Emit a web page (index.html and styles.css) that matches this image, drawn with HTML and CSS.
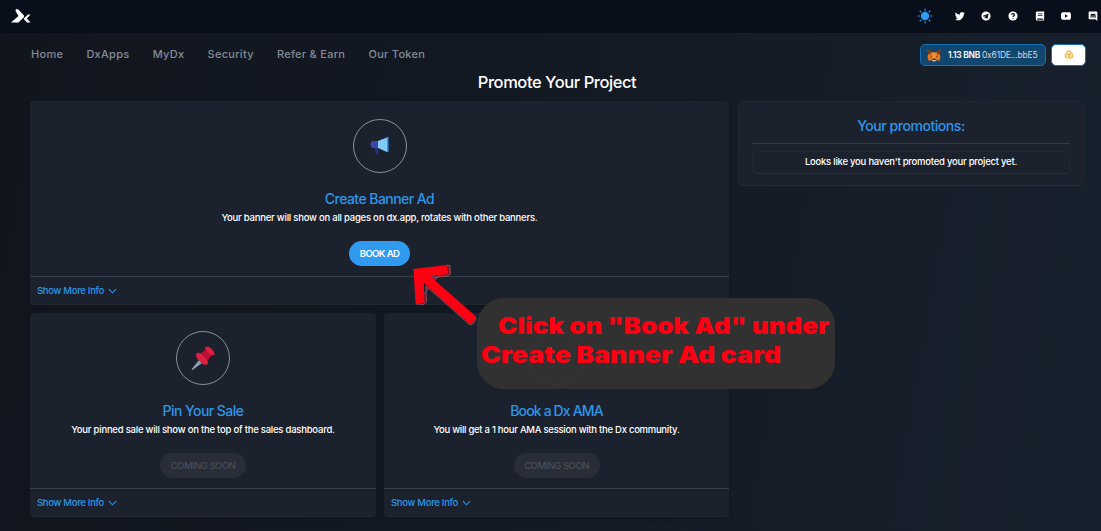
FILE: index.html
```html
<!DOCTYPE html>
<html lang="en">
<head>
<meta charset="utf-8">
<title>Promote Your Project</title>
<link rel="stylesheet" href="styles.css">
</head>
<body>
<header class="topbar">
  <svg class="logo" viewBox="0 0 20 14" fill="#fff"><path d="M5 0L7.300 .6L13 6.500L13 8L7.500 13.500H0L7.500 7L4.500 2Z"/><path d="M19.500 5.500H17L12.500 9.700L16 13.500H19.500L15.900 9.600Z"/></svg>
  <div class="social">
    <svg class="sun" viewBox="0 0 16 16"><circle cx="8" cy="8" r="3.600"/><path d="M8 1V2.400M8 13.600V15M1 8H2.400M13.600 8H15M3 3L4 4M12 12L13 13M3 13L4 12M12 4L13 3"/></svg>
    <svg viewBox="0 0 24 24"><path d="M23.600 5c-.9.400-1.800.600-2.800.800 1-.600 1.800-1.500 2.100-2.700-.9.600-2 1-3.100 1.200A4.900 4.900 0 0 0 11.500 8.800 13.900 13.900 0 0 1 1.400 3.700a4.900 4.900 0 0 0 1.500 6.600c-.8 0-1.500-.2-2.200-.6 0 2.400 1.700 4.400 3.900 4.900-.7.200-1.500.2-2.200.1.600 1.900 2.400 3.300 4.600 3.400A9.900 9.900 0 0 1-.2 20.100 13.900 13.900 0 0 0 21.200 7.700c.9-.7 1.700-1.600 2.400-2.700z"/></svg>
    <svg viewBox="0 0 24 24"><path fill-rule="evenodd" d="M12 1a11 11 0 1 0 0 22 11 11 0 0 0 0-22zM18 7l-2.200 11c-.2.800-.7.900-1.300.6l-3.300-2.500-1.700 1.700c-.5.400-.8.200-.8-.5l.3-3 6-5.500-7.500 4.700-3-1c-.8-.3-.8-.8.200-1.200L17 6.300c.7-.2 1.200 0 1 .7z"/></svg>
    <svg viewBox="0 0 24 24"><circle cx="12" cy="12" r="11"/><path d="M8.500 9C9 4.800 16 5.300 15.500 9.500C15.300 11.500 12 11.500 12 14.300M12 17V18.800" fill="none" stroke="#09101b" stroke-width="3"/></svg>
    <svg viewBox="0 0 24 24"><path fill-rule="evenodd" d="M6 1H22V17.500L21 18V21H22V23H6C3.500 23 2 21.500 2 19V5C2 2.500 3.500 1 6 1zM7 6V8H18V6zM7 10V12H18V10zM6 18C4.500 18 4.500 21 6 21H19V18z"/></svg>
    <svg viewBox="0 0 24 24"><path fill-rule="evenodd" d="M4 3H20C23 3 24 5 24 12S23 21 20 21H4C1 21 0 19 0 12S1 3 4 3zM9.500 8V16L16.500 12z"/></svg>
    <svg viewBox="0 0 24 24"><path fill-rule="evenodd" d="M4 1H20Q22.500 1 22.500 3.500V24L18 20H4Q1.500 20 1.500 17.500V3.500Q1.500 1 4 1zM6 15Q8 17 9 16L8.500 15H15.500L15 16Q17 17 18.500 15Q18.500 9 17 7L14 6L13.500 7H10.500L10 6L7 7Q5.500 10 6 15zM8 11H10.500V13.500H8zM13.500 11H16V13.500H13.500z"/></svg>
  </div>
</header>
<nav class="nav">
  <div class="links"><a>Home</a><a>DxApps</a><a>MyDx</a><a>Security</a><a>Refer &amp; Earn</a><a>Our Token</a></div>
  <div class="wallet">
    <div class="account">
      <svg class="fox" viewBox="0 0 28 26"><path fill="#e8741f" d="M1 1L11 7H17L27 1L25.500 11L27 16L24.500 24L18 22L16 24H12L10 22L3.500 24L1 16L2.500 11Z"/><path fill="#763d16" d="M1 1L9 4.500L8 9L2.500 11ZM27 1L19 4.500L20 9L25.500 11Z"/><path fill="#f6912d" d="M11 7H17L18 16L14 21L10 16Z"/><path fill="#34343c" d="M7 13L11 15L7.500 15.500ZM21 13L17 15L20.500 15.500ZM11.500 19H16.500L17 22H11Z"/><path fill="#d9c1b3" d="M10 22H18L16 25H12Z"/></svg>
      <span class="balance">1.13 BNB</span><span class="address">0x61DE...bbE5</span>
    </div>
    <div class="chain"><svg viewBox="0 0 20 20"><path fill="#f9dfa8" d="M10 1L18 5.500V14.500L10 19L2 14.500V5.500Z"/><path fill="none" stroke="#eba51f" stroke-width="1.800" d="M5 6.500L10 9.500L15 6.500M10 9.500V16M2.500 8V14L7 17M17.500 8V14L13 17M5 4L10 1.500L15 4"/></svg></div>
  </div>
</nav>
<main class="page">
  <h1 class="title">Promote Your Project</h1>
  <div class="columns">
    <div class="cards">
      <section class="card wide">
        <div class="body">
          <div class="ring"><svg class="horn" viewBox="0 0 20 20"><path fill="#2a2f88" d="M4.500 10H9L8 13.500L8.500 17.500Q7.500 19 5.500 17.500ZM17 7Q20.500 8.500 17 11Z"/><path fill="#3949ab" d="M3 5H9V12H3Q1 12 1 10.500L.5 8.500L1 6.500Q1 5 3 5Z"/><path fill="#82caf9" d="M8 5L17 1.500V16L8 12Z"/><path fill="#2196f3" d="M17 1Q18.500 0 18.500 2V15Q18.500 17 17 16Z"/></svg></div>
          <h2 class="name">Create Banner Ad</h2>
          <p class="text">Your banner will show on all pages on dx.app, rotates with other banners.</p>
          <button class="btn">BOOK AD</button>
        </div>
        <div class="more"><span>Show More Info</span><svg viewBox="0 0 10 6"><path d="M1 1L5 5L9 1"/></svg></div>
      </section>
      <section class="card">
        <div class="body">
          <div class="ring"><svg class="pin" viewBox="0 0 24 24"><path fill="#8fa1ad" d="M8 14L11 17L1.500 24L.5 23.500Z"/><path fill="#b90f31" d="M9 8L15 3L21 9L16 15Z"/><path fill="#df1f42" d="M14.500 1Q17-.5 19.500 2L22 4.500Q24.500 7.500 23 9Q20.500 10 17.500 7L16 5Q13 2 14.500 1ZM6 7Q9 6 12.500 10L14.500 12Q18 15.500 16.500 18Q13.500 20.500 9.500 16L7 13.500Q3.500 9.500 6 7Z"/></svg></div>
          <h2 class="name">Pin Your Sale</h2>
          <p class="text">Your pinned sale will show on the top of the sales dashboard.</p>
          <button class="btn soon" disabled>COMING SOON</button>
        </div>
        <div class="more"><span>Show More Info</span><svg viewBox="0 0 10 6"><path d="M1 1L5 5L9 1"/></svg></div>
      </section>
      <section class="card">
        <div class="body">
          <div class="ring"></div>
          <h2 class="name ama">Book a Dx AMA</h2>
          <p class="text ama-text">You will get a 1 hour AMA session with the Dx community.</p>
          <button class="btn soon" disabled>COMING SOON</button>
        </div>
        <div class="more"><span>Show More Info</span><svg viewBox="0 0 10 6"><path d="M1 1L5 5L9 1"/></svg></div>
      </section>
    </div>
    <aside class="promos">
      <h2 class="name">Your promotions:</h2>
      <p class="empty">Looks like you haven't promoted your project yet.</p>
    </aside>
  </div>
</main>
<div class="callout"><span class="line first">Click on "Book Ad" under</span><span class="line second">Create Banner Ad card</span></div>
<svg class="arrow" viewBox="0 0 70 66"><path fill="#8c1422" stroke="#a86a7c" stroke-width=".6" d="M37 1L40 1.500L40.500 10L38 12L20 14L66 55L63.500 59.500L60 61L16 22L16.500 38L14 40.500L6 40Z"/><path fill="#ff0012" d="M3.500 5L37 1V10L20.500 12.500L66.500 53L60 60L14 19V39H5.500Z"/></svg>
</body>
</html>
```
FILE: styles.css
```css
* { box-sizing: border-box; }
body {
  margin: 0; height: 531px; overflow: hidden; position: relative;
  font-family: Inter, "Liberation Sans", sans-serif; font-size: 9.5px; color: #fff;
  background: linear-gradient(100deg, #11151e 0%, #131a24 50%, #17212d 100%);
}
h1, h2, p { margin: 0; font-weight: 500; white-space: nowrap; }
.topbar { height: 33px; background: #080f1b; display: flex; justify-content: space-between; align-items: center; padding: 0 3px 1px 11px; }
.logo { width: 20px; height: 14px; }
.social { display: flex; align-items: center; gap: 16.7px; }
.social svg { width: 10px; height: 10px; fill: #fff; flex: none; }
.social .sun { width: 16px; height: 16px; fill: #2e9bf0; stroke: #2e9bf0; stroke-width: 1.1; stroke-linecap: round; margin-right: 5px; }
.nav { height: 38px; padding: 11px 15px 0 31px; display: flex; justify-content: space-between; align-items: flex-start; }
.links { display: flex; gap: 23.2px; line-height: 20px; font-size: 11px; font-weight: 500; color: #858c98; letter-spacing: .28px; white-space: nowrap; }
.wallet { display: flex; gap: 5px; }
.account { width: 126px; height: 22px; border: 1px solid #1670b8; border-radius: 5px; background: #11466e; display: flex; align-items: center; padding-left: 6px; font-size: 8.5px; letter-spacing: -.3px; white-space: nowrap; }
.fox { width: 14px; height: 13px; margin-right: 7px; }
.balance { font-weight: 600; margin-right: 2px; }
.address { color: #ccd8e4; letter-spacing: -.2px; }
.chain { width: 35px; height: 22px; border: 1px solid #1670b8; border-radius: 5px; background: #fff; display: flex; align-items: center; justify-content: center; }
.chain svg { width: 10px; height: 10px; }
.page { padding: 0 17px 0 30px; }
.title { height: 30px; line-height: 22px; text-align: center; font-size: 16.5px; letter-spacing: -.44px; }
.columns { display: grid; grid-template-columns: 699px 346px; gap: 9px; align-items: start; }
.cards { display: grid; grid-template-columns: 346px 345px; gap: 8px; }
.card { height: 204px; background: #1c222d; border-radius: 4px; border-bottom: 1px solid #23282f; box-shadow: 0 1px 4px #10151d; }
.wide { grid-column: 1 / 3; }
.body { height: 176px; border-bottom: 1px solid #393f49; padding-top: 18px; display: flex; flex-direction: column; align-items: center; }
.ring { width: 54px; height: 54px; flex: none; border: 1px solid #8b919b; border-radius: 50%; display: flex; align-items: center; justify-content: center; }
.horn { width: 20px; height: 20px; }
.pin { width: 24px; height: 24px; }
.name { font-size: 14px; color: #2d96ea; line-height: 20px; letter-spacing: -.55px; }
.ama { letter-spacing: -.85px; }
.body .name { margin-top: 16px; }
.text { font-size: 9.5px; line-height: 16px; letter-spacing: -.23px; padding-top: 1px; }
.ama-text { letter-spacing: -.27px; }
.btn { margin-top: 15px; height: 25px; flex: none; width: 61px; border: 0; border-radius: 13px; padding: 0; background: #2f9af0; color: #fff; font: 600 9.5px Inter, sans-serif; letter-spacing: -.6px; white-space: nowrap; }
.soon { width: 86px; background: #282d37; color: #494e58; font-weight: 500; letter-spacing: -.5px; }
.more { height: 27px; padding: 0 0 0 7px; display: flex; align-items: center; gap: 4px; color: #2d96ea; font-size: 9.5px; font-weight: 500; letter-spacing: -.3px; }
.more svg { width: 9px; height: 6px; fill: none; stroke: #2d96ea; stroke-width: 1.2; }
.promos { height: 85px; background: #1c222d; border: 1px solid #20262f; border-bottom-color: #292d32; border-radius: 5px; padding: 0 13px; text-align: center; }
.promos .name { height: 42px; padding-top: 14px; border-bottom: 1px solid #343a44; letter-spacing: -.45px; }
.empty { height: 23px; margin-top: 7px; border: 1px solid #222831; border-bottom-color: #302f31; border-radius: 5px; line-height: 20px; font-size: 9.5px; letter-spacing: -.24px; }
.callout { position: absolute; left: 477px; top: 298px; width: 358px; height: 91px; border-radius: 27px; background: rgba(51, 50, 50, .96); color: #ff0012; font-size: 23px; font-weight: 900; line-height: 29px; padding: 14px 0 0 4px; white-space: nowrap; }
.line { display: block; transform-origin: 0 50%; }
.first { margin-left: 17px; transform: scaleX(1.127); }
.second { transform: scaleX(1.163); }
.arrow { position: absolute; left: 410px; top: 264px; width: 70px; height: 66px; }
```
